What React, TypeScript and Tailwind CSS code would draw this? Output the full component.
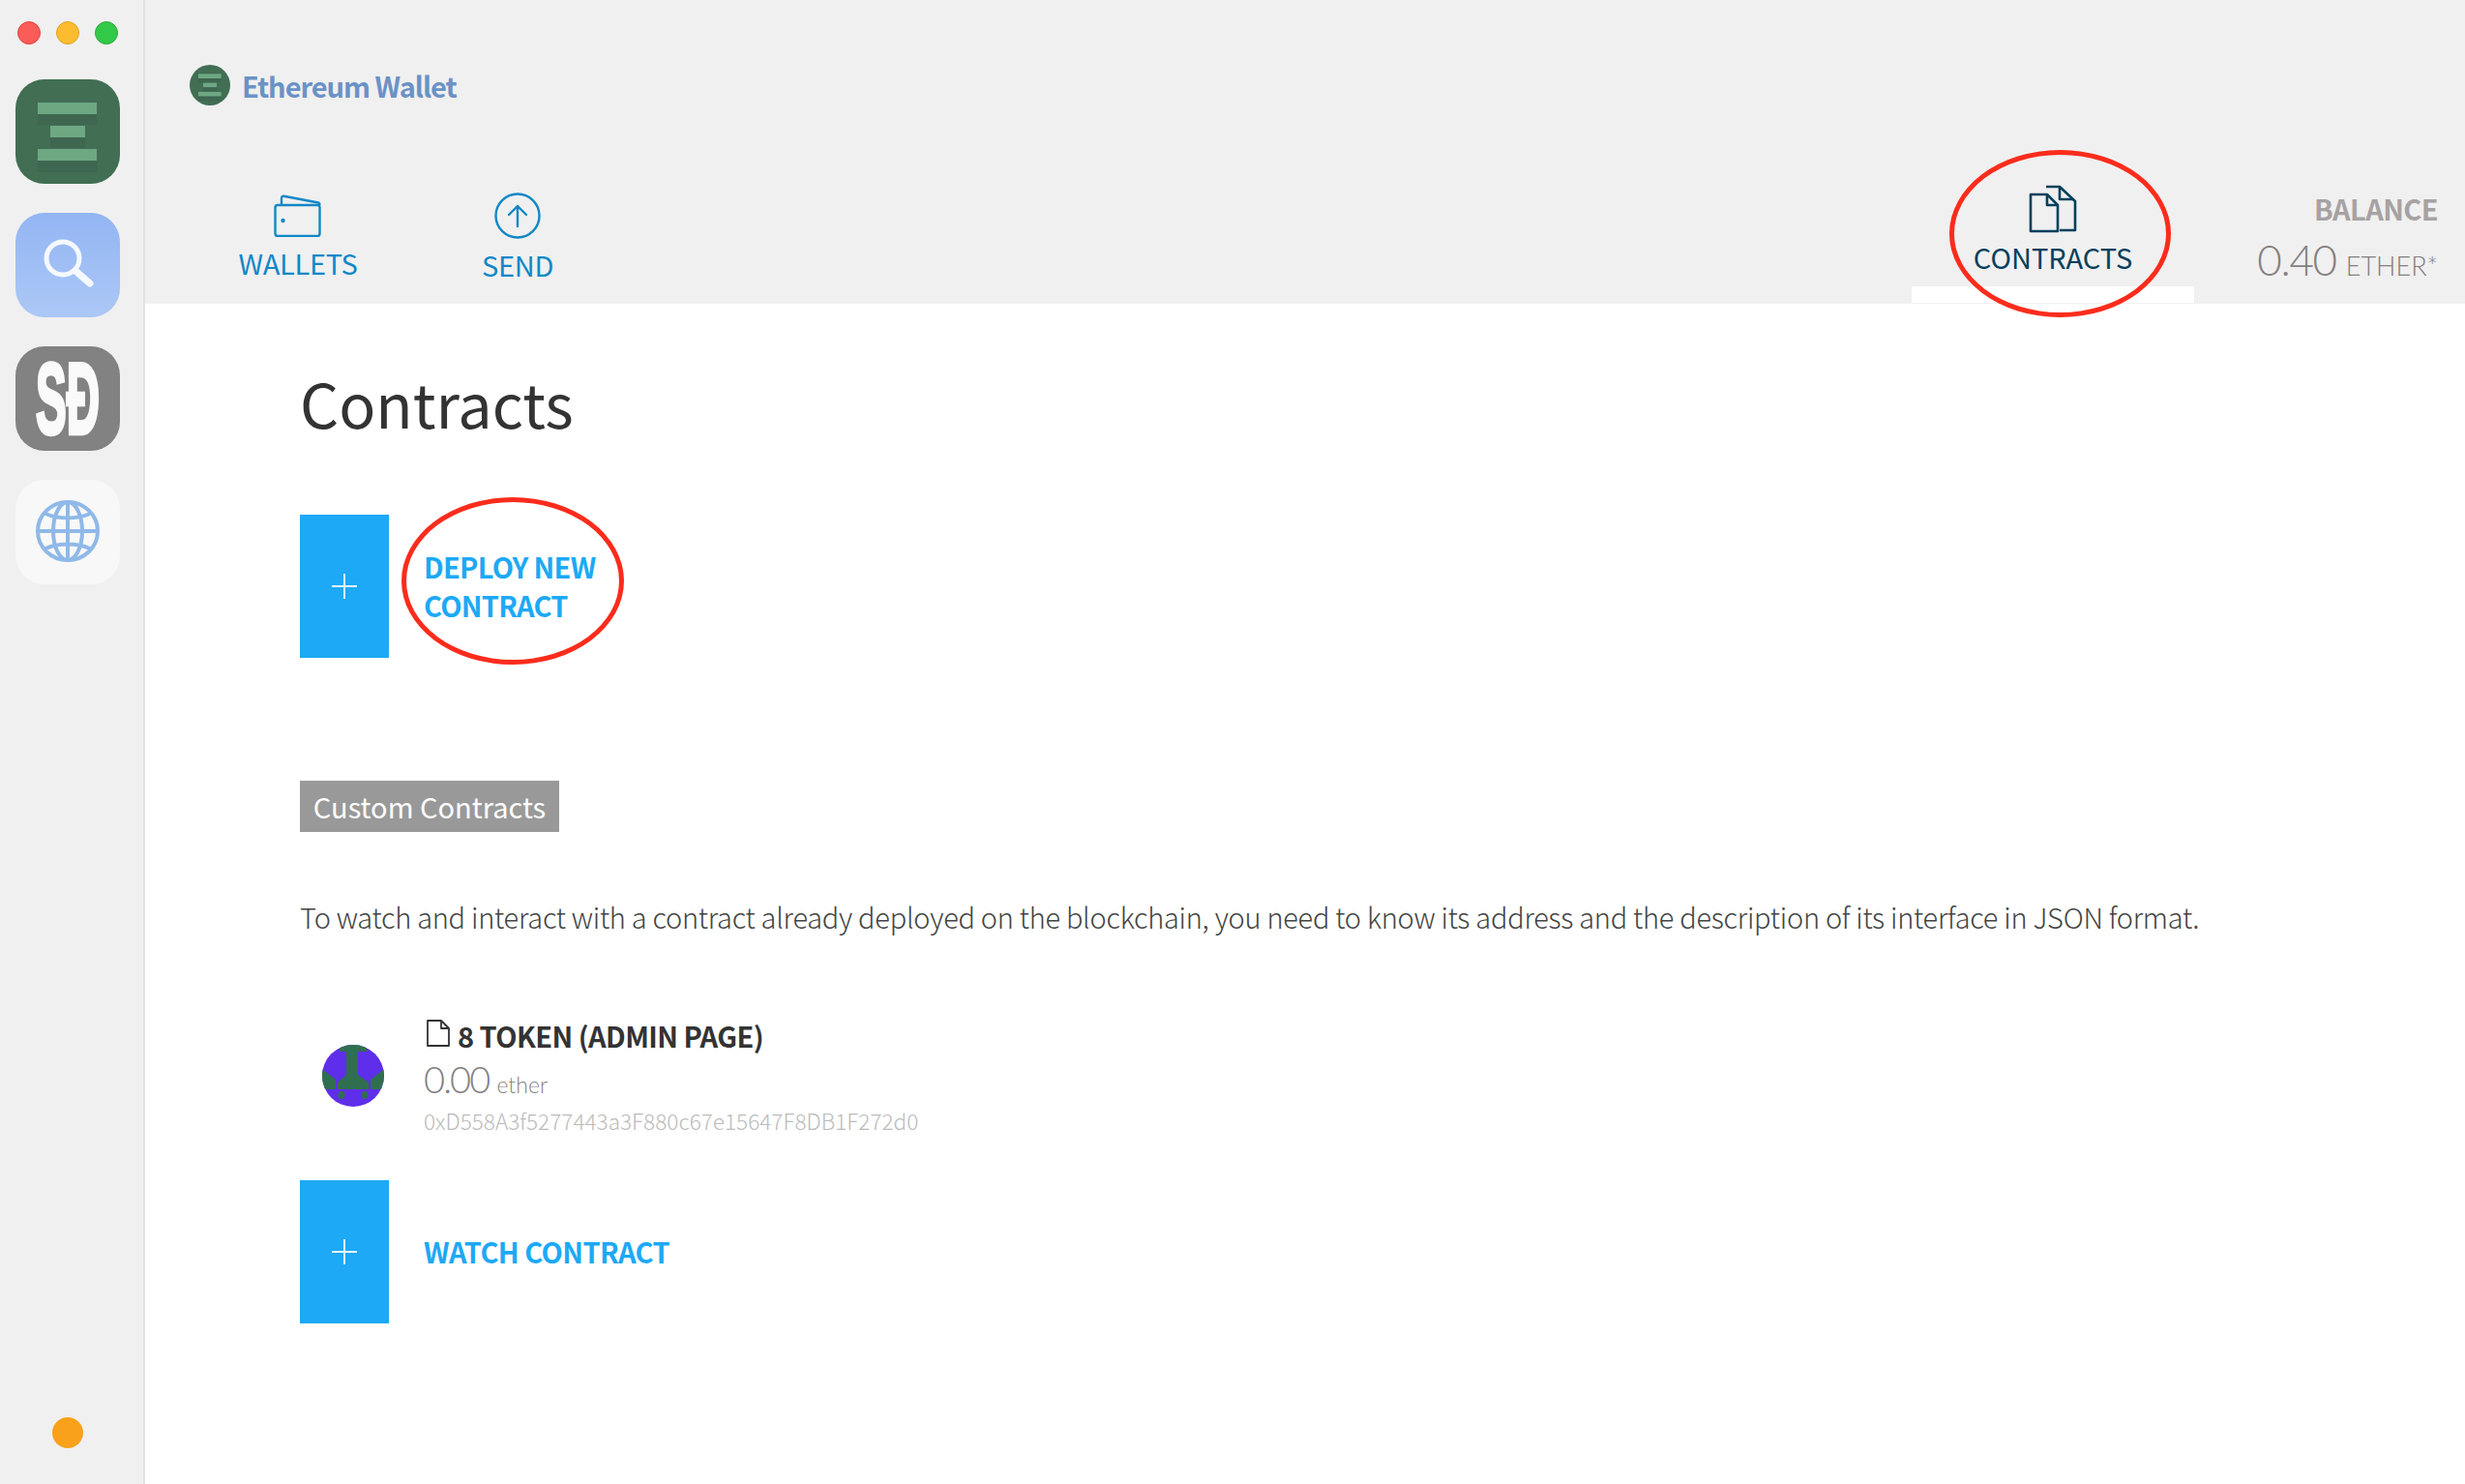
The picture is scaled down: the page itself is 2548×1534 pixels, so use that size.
const font = { fontFamily: '"Noto Sans CJK SC", "Noto Sans", sans-serif' };
const thin = { fontFamily: 'Lato, "Noto Sans", sans-serif' };

function Squircle({ className, children }: { className: string; children: React.ReactNode }) {
  return <div className={`relative w-[108px] h-[108px] rounded-[30px] flex items-center justify-center ${className}`}>{children}</div>;
}

function Bars({ size }: { size: number }) {
  return (
    <svg width={size} height={size} viewBox="0 0 108 108" className="block">
      <rect x="23" y="24" width="61" height="12" fill="#6da883" />
      <rect x="23" y="36" width="61" height="11" fill="#3f6650" />
      <rect x="36" y="48" width="36" height="12" fill="#6da883" />
      <rect x="36" y="60" width="36" height="11" fill="#3f6650" />
      <rect x="23" y="72" width="61" height="12" fill="#6da883" />
      <rect x="23" y="84" width="61" height="12" fill="#3f6650" />
    </svg>
  );
}

function PlusButton() {
  return (
    <div className="w-[92px] h-[148px] bg-[#1da9f6] flex items-center justify-center shrink-0">
      <svg width="26" height="26" viewBox="0 0 26 26"><path d="M13 0v26M0 13h26" stroke="#fff" strokeWidth="2" opacity="0.9" /></svg>
    </div>
  );
}

function Tab({ label, children, className }: { label: string; children: React.ReactNode; className: string }) {
  return (
    <div className={`flex flex-col items-center ${className}`}>
      {children}
      <div className="text-[29px] leading-[40px] mt-[6px] text-[#1287c7] tracking-[-0.01em]">{label}</div>
    </div>
  );
}

export default function App() {
  return (
    <div className="flex w-[2548px] h-[1534px] bg-white overflow-hidden" style={font}>
      <aside className="w-[150px] shrink-0 bg-[#f0f0f0] border-r-2 border-[#e2e2e2] flex flex-col items-center pt-[22px] pb-[37px]">
        <div className="flex gap-[16px] h-[24px] w-[104px] mr-[8px]">
          <div className="w-[24px] h-[24px] rounded-full bg-[#fc5c57] border border-[#e0443e]" />
          <div className="w-[24px] h-[24px] rounded-full bg-[#fdbc30] border border-[#dea123]" />
          <div className="w-[24px] h-[24px] rounded-full bg-[#33c948] border border-[#2bac3a]" />
        </div>
        <div className="flex flex-col gap-[30px] mt-[36px] mr-[8px]">
          <Squircle className="bg-[#426e54]"><Bars size={108} /></Squircle>
          <Squircle className="bg-gradient-to-b from-[#93b5f3] to-[#acc8f6]">
            <svg width="108" height="108" viewBox="0 0 108 108">
              <ellipse cx="49" cy="47" rx="17" ry="17" fill="none" stroke="#f6f9ff" strokeWidth="5" />
              <path d="M62 60 L77 73" stroke="#f6f9ff" strokeWidth="7" strokeLinecap="round" />
            </svg>
          </Squircle>
          <Squircle className="bg-[#828282]">
            <span className="text-[#fafafa] text-[72px] leading-none font-bold scale-x-[0.66] scale-y-[1.45] whitespace-nowrap [-webkit-text-stroke:3px_#fafafa]" style={{ fontFamily: '"Liberation Sans", sans-serif' }}>SĐ</span>
          </Squircle>
          <Squircle className="bg-[#f8f8f8]">
            <svg width="108" height="108" viewBox="0 0 108 108" fill="none" stroke="#8fb9e8" strokeWidth="4" className="-mt-[2px]">
              <ellipse cx="54" cy="54" rx="31" ry="30" />
              <ellipse cx="54" cy="54" rx="15" ry="30" />
              <path d="M54 24v60M23 54h62M31 36c14 6 32 6 46 0M31 72c14-6 32-6 46 0" />
            </svg>
          </Squircle>
        </div>
        <div className="mt-auto w-[32px] h-[32px] rounded-full bg-[#f9a11b] mr-[8px]" />
      </aside>

      <main className="flex-1 flex flex-col min-w-0">
        <header className="relative h-[314px] shrink-0 bg-[#f0f0f0] flex flex-col">
          <div className="flex items-center gap-[13px] pl-[46px] pt-[67px]">
            <div className="w-[42px] h-[42px] rounded-full bg-[#426e54] overflow-hidden"><Bars size={42} /></div>
            <span className="text-[29px] leading-[42px] font-bold text-[#6a92c6] tracking-[-0.035em] -ml-[1px]">Ethereum Wallet</span>
          </div>
          <div className="flex items-start flex-1 mt-[89px] min-h-0">
            <div className="flex ml-[72px] gap-[55px]">
              <Tab label="WALLETS" className="w-[172px]">
                <svg width="50" height="44" viewBox="0 0 50 44" fill="none" stroke="#1287c7" strokeWidth="2.4" strokeLinejoin="round" className="mt-[3px]">
                  <rect x="1.5" y="11" width="46" height="32" rx="2.5" />
                  <path d="M8 11V4c0-1.5 1-2.5 2.5-2.2L46 8.5c1 .3 1.5 1 1.5 2.5" />
                  <circle cx="9.5" cy="27" r="2.2" fill="#1287c7" stroke="none" />
                </svg>
              </Tab>
              <Tab label="SEND" className="w-[172px]">
                <svg width="48" height="48" viewBox="0 0 48 48" fill="none" stroke="#1287c7" strokeWidth="2.4" strokeLinecap="round" strokeLinejoin="round" className="mt-[1px]">
                  <circle cx="24" cy="24" r="22.5" />
                  <path d="M24 35V14M15 23l9-9 9 9" />
                </svg>
              </Tab>
            </div>
            <div className="ml-auto flex items-start">
              <div className="w-[292px] h-[128px] -mt-[7px] flex flex-col items-center self-start">
                <svg width="50" height="50" viewBox="0 0 50 50" fill="none" stroke="#033f5c" strokeWidth="2.6" strokeLinejoin="round">
                  <path d="M2 10h17l11 11v27H2z" />
                  <path d="M19 10v11h11" />
                  <path d="M18 2h14l16 15v30H32" />
                  <path d="M32 2v13h14" />
                </svg>
                <div className="text-[29px] leading-[40px] text-[#033f5c] mt-[4px]">CONTRACTS</div>
                <div className="mt-[11px] w-full h-[17px] bg-white" />
              </div>
              <div className="w-[280px] pr-[28px] -mt-[3px] text-right">
                <div className="text-[29px] leading-[40px] font-bold text-[#a7a2a2] tracking-[-0.02em]">BALANCE</div>
                <div className="leading-[56px] mt-[5px] text-[#857f7f] whitespace-nowrap" style={thin}>
                  <span className="text-[44px] font-light tracking-[-0.03em]">0.40</span>
                  <span className="text-[27px] ml-[10px] font-light">ETHER*</span>
                </div>
              </div>
            </div>
          </div>
          <div className="absolute left-[1865px] top-[155px] w-[229px] h-[173px] rounded-[50%] border-[5px] border-[#fb2c1c]" />
        </header>

        <section className="relative flex-1 pl-[160px] pr-[100px] text-[#333]">
          <h1 className="text-[63px] leading-[80px] mt-[62px] font-normal">Contracts</h1>
          <div className="flex items-center gap-[36px] mt-[76px]">
            <PlusButton />
            <div className="text-[29px] leading-[40px] font-bold text-[#1da9f6] tracking-[-0.025em] -mt-[2px]">DEPLOY NEW<br />CONTRACT</div>
          </div>
          <div className="mt-[127px] w-[268px] h-[53px] bg-[#999] text-white text-[29px] leading-[53px] text-center">Custom Contracts</div>
          <p className="mt-[65px] text-[29px] leading-[44px] font-light text-[#444] whitespace-nowrap tracking-[-0.01em]">To watch and interact with a contract already deployed on the blockchain, you need to know its address and the description of its interface in JSON format.</p>
          <div className="flex items-start mt-[81px]">
            <svg width="64" height="64" viewBox="0 0 64 64" className="ml-[23px] shrink-0 mt-[30px]">
              <defs><clipPath id="avatar-clip"><circle cx="32" cy="32" r="32" /></clipPath></defs>
              <g clipPath="url(#avatar-clip)">
                <rect width="64" height="64" fill="#5f2eea" />
                <path d="M18 0h28v7H18z" fill="#2f6f4f" />
                <path d="M25 7h12v24l11 8v7H16v-7l9-8z" fill="#2f6f4f" />
                <path d="M0 25 L14 36 V46 L3 46 L0 42Z M64 25 L50 36 V46 L61 46 L64 42Z" fill="#2f6f4f" />
                <ellipse cx="20" cy="52" rx="3.5" ry="4" fill="#2f6f4f" />
                <ellipse cx="44" cy="52" rx="3.5" ry="4" fill="#2f6f4f" />
              </g>
            </svg>
            <div className="ml-[41px]">
              <div className="flex items-center">
                <svg width="24" height="28" viewBox="0 0 24 28" fill="none" stroke="#333" strokeWidth="1.8" strokeLinejoin="round" className="ml-[3px] -mt-[4px]">
                  <path d="M1 1h14l8 8v18H1z" /><path d="M15 1v8h8" />
                </svg>
                <span className="text-[29px] leading-[40px] font-bold ml-[8px] tracking-[-0.02em]">8 TOKEN (ADMIN PAGE)</span>
              </div>
              <div className="leading-[50px] text-[#857f7f]" style={thin}>
                <span className="text-[38px] font-light tracking-[-0.05em]">0.00</span>
                <span className="text-[23px] ml-[8px] font-light">ether</span>
              </div>
              <div className="text-[22.6px] leading-[26px] text-[#bbb] font-light -mt-[3px]">0xD558A3f5277443a3F880c67e15647F8DB1F272d0</div>
            </div>
          </div>
          <div className="flex items-center gap-[36px] mt-[48px]">
            <PlusButton />
            <div className="text-[29px] leading-[40px] font-bold text-[#1da9f6] tracking-[-0.02em] -mt-[2px]">WATCH CONTRACT</div>
          </div>
          <div className="absolute left-[265px] top-[200px] w-[230px] h-[173px] rounded-[50%] border-[5px] border-[#fb2c1c]" />
        </section>
      </main>
    </div>
  );
}
